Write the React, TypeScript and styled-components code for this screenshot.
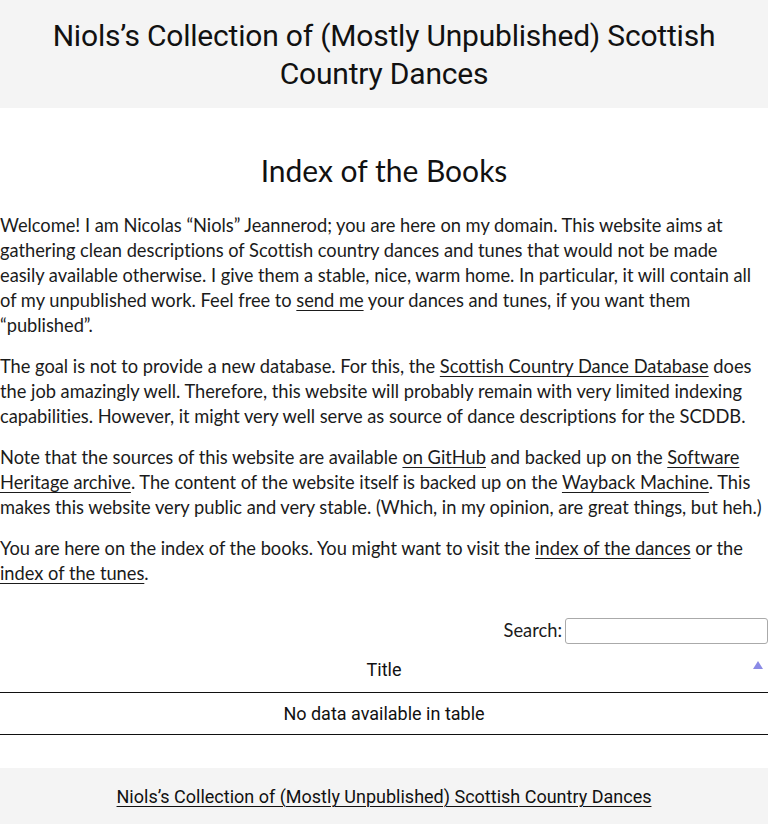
import React from "react";
import styled, { createGlobalStyle } from "styled-components";

const Global = createGlobalStyle`
  html, body { margin: 0; padding: 0; background: #fff; }
  body { font-family: Lato, "Noto Sans", sans-serif; color: #1b1b1b; }
`;

const Header = styled.header`
  background: #f4f4f4;
  padding: 17px 0 15px;
  text-align: center;
`;

const SiteTitle = styled.div`
  font-family: Roboto, "Noto Sans", sans-serif;
  font-size: 30px;
  letter-spacing: -0.2px;
  line-height: 38px;
  color: #111;
  padding: 0 10px;
`;

const Main = styled.main`
  padding-top: 42px;
  padding-bottom: 33px;
`;

const PageTitle = styled.h1`
  margin: 0 0 23px;
  font-size: 30px;
  line-height: 40px;
  font-weight: 400;
  text-align: center;
  color: #111;
`;

const Para = styled.p`
  margin: 0 0 16px;
  max-width: 765px;
  font-size: 18.3px;
  letter-spacing: -0.02px;
  line-height: 25px;
`;

const Link = styled.a`
  color: inherit;
  text-decoration: underline;
  text-underline-offset: 3px;
  text-decoration-thickness: 1px;
`;

const FilterRow = styled.div`
  display: flex;
  justify-content: flex-end;
  align-items: center;
  margin-top: 29px;
  font-size: 18.3px;
`;

const SearchInput = styled.input`
  margin: 3px 0 0 3px;
  width: 203px;
  height: 26px;
  box-sizing: border-box;
  border: 1px solid #aaa;
  border-radius: 3px;
  background: #fff;
`;

const Table = styled.table`
  width: 100%;
  border-collapse: collapse;
  margin-top: 3px;
`;

const Th = styled.th`
  position: relative;
  font-family: Roboto, "Noto Sans", sans-serif;
  font-size: 18px;
  line-height: 25px;
  font-weight: 400;
  padding: 10px 18px;
  border-bottom: 1px solid #111;
  color: #111;
`;

const SortArrow = styled.span`
  position: absolute;
  right: 5px;
  top: 14px;
  width: 0;
  height: 0;
  border-left: 5px solid transparent;
  border-right: 5px solid transparent;
  border-bottom: 8px solid #8b8be6;
`;

const Td = styled.td`
  font-family: Roboto, "Noto Sans", sans-serif;
  font-size: 18px;
  line-height: 25px;
  padding: 8px 10px;
  text-align: center;
  border-bottom: 1px solid #111;
  color: #111;
`;

const Footer = styled.footer`
  background: #f4f4f4;
  padding: 16px 0 30px;
  text-align: center;
  font-family: Roboto, "Noto Sans", sans-serif;
  font-size: 18px;
  line-height: 25px;
  color: #111;
`;

export default function App() {
  return (
    <>
      <Global />
      <Header>
        <SiteTitle>
          Niols’s Collection of (Mostly Unpublished) Scottish Country Dances
        </SiteTitle>
      </Header>
      <Main>
        <PageTitle>Index of the Books</PageTitle>
        <Para>
          Welcome! I am Nicolas “Niols” Jeannerod; you are here on my domain. This
          website aims at gathering clean descriptions of Scottish country dances
          and tunes that would not be made easily available otherwise. I give them a
          stable, nice, warm home. In particular, it will contain all of my
          unpublished work. Feel free to <Link href="#">send me</Link> your dances
          and tunes, if you want them “published”.
        </Para>
        <Para>
          The goal is not to provide a new database. For this, the{" "}
          <Link href="#">Scottish Country Dance Database</Link> does the job
          amazingly well. Therefore, this website will probably remain with very
          limited indexing capabilities. However, it might very well serve as source
          of dance descriptions for the SCDDB.
        </Para>
        <Para>
          Note that the sources of this website are available{" "}
          <Link href="#">on GitHub</Link> and backed up on the{" "}
          <Link href="#">Software Heritage archive</Link>. The content of the website
          itself is backed up on the <Link href="#">Wayback Machine</Link>. This
          makes this website very public and very stable. (Which, in my opinion, are
          great things, but heh.)
        </Para>
        <Para>
          You are here on the index of the books. You might want to visit the{" "}
          <Link href="#">index of the dances</Link> or the{" "}
          <Link href="#">index of the tunes</Link>.
        </Para>
        <FilterRow>
          <label htmlFor="search">Search:</label>
          <SearchInput id="search" type="search" />
        </FilterRow>
        <Table>
          <thead>
            <tr>
              <Th>
                Title
                <SortArrow />
              </Th>
            </tr>
          </thead>
          <tbody>
            <tr>
              <Td>No data available in table</Td>
            </tr>
          </tbody>
        </Table>
      </Main>
      <Footer>
        <Link href="#">
          Niols’s Collection of (Mostly Unpublished) Scottish Country Dances
        </Link>
      </Footer>
    </>
  );
}
